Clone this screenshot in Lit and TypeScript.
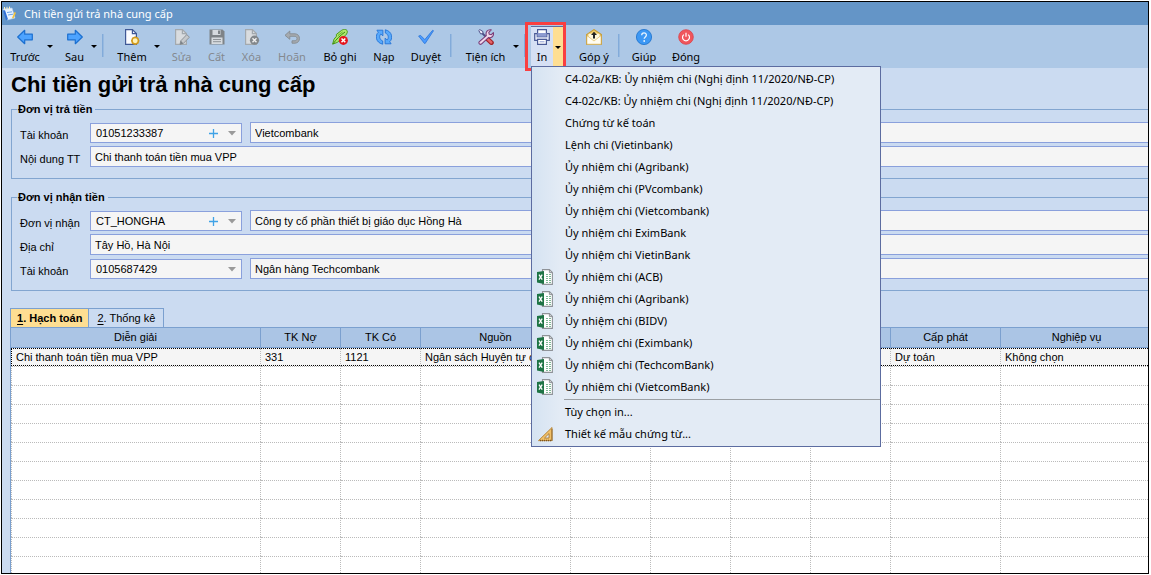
import { LitElement, html, svg, css, nothing } from "lit";
import { customElement } from "lit/decorators.js";
import { classMap } from "lit/directives/class-map.js";

const arrowRight = svg`<path d="M.7 5.2h7.6V1.3L15.3 8l-7 6.700V10.800H.7z" fill="#4da3ff" stroke="#1b6fd0" stroke-width="1.200" stroke-linejoin="round"/>`;
const doc = (stroke: string, fill: string) => svg`<path d="M1.600.6h6.800l4 4v10.800H1.600z" fill="${fill}" stroke="${stroke}" stroke-width="1.200"/><path d="M8.400.6v4h4" fill="none" stroke="${stroke}" stroke-width="1.200"/>`;
const halfTurn = svg`<path d="M6.700 15.200C-.6 13.600-1 6 2.300 3.300L.9 1.200h6v5.600L4.800 5C3 7 3.300 10.600 6.700 12z" fill="#58a9fb" stroke="#2273d6" stroke-width=".9" stroke-linejoin="round"/>`;

const icons: Record<string, unknown> = {
  back: svg`<g transform="matrix(-1 0 0 1 16 0)">${arrowRight}</g>`,
  next: arrowRight,
  add: svg`${doc("#3f5896", "#fbfcff")}<circle cx="11.200" cy="11.700" r="3.200" fill="#fff2b8" stroke="#d29a1c" stroke-width="1.500"/><path d="M11.200 7.600v1M11.200 14.800v1M7.100 11.700h1M14.300 11.700h1M8.400 8.900l.6.600M14 8.900l-.6.600M8.400 14.500l.6-.6M14 14.500l-.6-.6" stroke="#d29a1c" stroke-width="1.400"/>`,
  edit: svg`${doc("#a3a9ae", "#d9dcdf")}<path d="M6 15.400l.8-3.600 6-6.200 2.600 2.600-6 6.200z" fill="#c6c9cc" stroke="#8e9499"/><path d="M6 15.400l.8-3.600 2.600 2.600z" fill="#7d8388"/>`,
  save: svg`<path d="M.5.5h13l2 2v13H.5z" fill="#7e8387"/><path d="M3.500 1h8v5h-8z" fill="#d6dade"/><path d="M9 1.500h2v3.500H9z" fill="#7e8387"/><path d="M2.500 8.500h11v6.500h-11z" fill="#d6dade"/><path d="M4 10.500h8M4 12.700h8" stroke="#8f9498"/>`,
  remove: svg`${doc("#a3a9ae", "#d9dcdf")}<circle cx="10.500" cy="11.200" r="4.600" fill="#82878b"/><path d="M8.500 9.200l4 4M12.500 9.200l-4 4" stroke="#f0f0f0" stroke-width="1.400"/>`,
  undo: svg`<path d="M1 6.300L5.800 2v2.800h5.200c6 .2 5.900 9.200 0 9.400H8v-2.400h3c2.700-.2 2.700-4.300 0-4.500H5.800v3z" fill="#a5aaaf" stroke="#858b91" stroke-width=".9" stroke-linejoin="round"/>`,
  unpost: svg`<path d="M.6 15.200L2 10.200 4.500 7.200 4.300 5.500 9.500 1.400C12-.4 15.800.2 15.300 3.300c-.5 2.700-3 4-5 5.700L5.300 13.400z" fill="#aee66c" stroke="#4b9a1b" stroke-linejoin="round"/><path d="M1 15C4 10.500 8 6.500 13 3" stroke="#3b8a12" fill="none"/><path d="M6 6.500c2-1.500 3-2.300 4.500-3.500" stroke="#5cae2a"/><circle cx="11.400" cy="11.400" r="4.500" fill="#e5141c"/><path d="M9.500 9.500l3.800 3.800M13.300 9.500l-3.800 3.800" stroke="#fff" stroke-width="1.500"/>`,
  reload: svg`${halfTurn}<g transform="rotate(180 8 8)">${halfTurn}</g>`,
  check: svg`<path d="M.6 7l2-.6 4.200 4.200L14.600 1.300l.9.400L7.200 14.400h-.8z" fill="#4c9cff" stroke="#2a74d8" stroke-width=".8" stroke-linejoin="round"/>`,
  tools: svg`<path d="M3 3l6 6" stroke="#4d4f86" stroke-width="1.800"/><path d="M.8 1.500L1.800.6 5 2.600l-.2 2-2.200.3z" fill="#f4f4ff" stroke="#4d4f86"/><path d="M9.500 10l4 3.700" stroke="#a02329" stroke-width="4.600" stroke-linecap="round"/><path d="M9.700 10.200l3.600 3.300" stroke="#e4656a" stroke-width="2.400" stroke-linecap="round"/><path d="M1.100 12.900l7.200-6.300C7.300 3.200 9.500.2 13.200.9L10.800 3.300l.5 2 2 .4 2.100-2.100c.7 3.700-2 5.700-5 5L3.400 15.100c-1.500.8-3-.8-2.300-2.200z" fill="#f0d8ea" stroke="#7a3d78" stroke-width="1.100" stroke-linejoin="round"/>`,
  print: svg`<path d="M3.600 5V.7h8.800V5" fill="#fff" stroke="#4a5a96" stroke-width="1.200"/><path d="M.7 4.700h2.600v3h9.400v-3h2.600v6.600H.7z" fill="#e7ebf8" stroke="#4a5a96" stroke-width="1.200"/><path d="M3.500 4h9v3.700h-9z" fill="#8d9bd0"/><path d="M3.600 10.300h8.800v5H3.600z" fill="#fff" stroke="#4a5a96" stroke-width="1.200"/><path d="M5.500 12.800h5" stroke="#8d9bd0"/>`,
  feedback: svg`<path d="M.6 5.600L8 .6l7.400 5v9.700H.6z" fill="#f0cd6c" stroke="#c59a35" stroke-width="1.100"/><path d="M2.500 4.700h11v5L8 13 2.500 9.700z" fill="#fff8dc"/><path d="M.9 6.500L8 12l7.100-5.500v8.700H.9z" fill="#fffdf2" stroke="#d5ad4d" stroke-width=".6"/><path d="M8 2.800l3 3.200H9v3.500H7V6H5z" fill="#222"/>`,
  help: svg`<circle cx="8" cy="8" r="7.600" fill="#3d98f4" stroke="#1970cb" stroke-width=".8"/><path d="M5.700 6.200c0-3 4.700-3 4.700-.1 0 1.800-2.200 1.800-2.200 3.700" fill="none" stroke="#e8f4ff" stroke-width="1.300"/><circle cx="8.200" cy="12" r=".9" fill="#e8f4ff"/>`,
  power: svg`<circle cx="8" cy="8" r="7.300" fill="#f0565c" stroke="#d9434a" stroke-width=".8"/><path d="M5.800 5.600a3.500 3.500 0 1 0 4.400 0M8 3.800v4" fill="none" stroke="#fff" stroke-width="1.200"/>`,
  excel: svg`<path d="M5.500.6h6.900l3 3v11.800h-9.900z" fill="#fff" stroke="#8f9398" stroke-width="1.100"/><path d="M12.400.6v3h3" fill="none" stroke="#8f9398"/><path d="M9 5.500h2M12 5.500h2M9 7.500h2M12 7.500h2M9 9.500h2M12 9.500h2M9 11.500h2M12 11.500h2M9 13.500h2M12 13.500h2" stroke="#7fb795"/><path d="M0 3l7-1v13l-7-1.500z" fill="#1e7445"/><path d="M2 5.700l3.200 5M5.200 5.700L2 10.700" stroke="#fff" stroke-width="1.300"/>`,
  ruler: svg`<path d="M1.500 14.600L15 1.500v13.100z" fill="#f0c069" stroke="#b9873b"/><path d="M7.500 12L12 7.600V12z" fill="#e4ecf5" stroke="#a06f28" stroke-width=".8"/><path d="M3 14.500h12V3" fill="none" stroke="#7d541c" stroke-width="1.400" stroke-dasharray="1 1"/>`,
};

const icon = (name: string) => html`<svg class="icon" viewBox="0 0 16 16" aria-hidden="true">${icons[name]}</svg>`;

interface Tool {
  icon: string;
  label: string;
  size: string;
  split?: boolean;
  disabled?: boolean;
  open?: boolean;
}

const tools: Array<Tool | null> = [
  { icon: "back", label: "Trước", size: "m", split: true },
  { icon: "next", label: "Sau", size: "s", split: true },
  null,
  { icon: "add", label: "Thêm", size: "m", split: true },
  { icon: "edit", label: "Sửa", size: "s", disabled: true },
  { icon: "save", label: "Cất", size: "s", disabled: true },
  { icon: "remove", label: "Xóa", size: "s", disabled: true },
  { icon: "undo", label: "Hoãn", size: "m", disabled: true },
  { icon: "unpost", label: "Bỏ ghi", size: "l" },
  { icon: "reload", label: "Nạp", size: "r" },
  { icon: "check", label: "Duyệt", size: "m" },
  null,
  { icon: "tools", label: "Tiện ích", size: "xl", split: true },
  null,
  { icon: "print", label: "In", size: "xs", split: true, open: true },
  null,
  { icon: "feedback", label: "Góp ý", size: "m" },
  null,
  { icon: "help", label: "Giúp", size: "r" },
  { icon: "power", label: "Đóng", size: "m" },
];

const menu: Array<[string, string?] | null> = [
  ["C4-02a/KB: Ủy nhiệm chi (Nghị định 11/2020/NĐ-CP)"],
  ["C4-02c/KB: Ủy nhiệm chi (Nghị định 11/2020/NĐ-CP)"],
  ["Chứng từ kế toán"],
  ["Lệnh chi (Vietinbank)"],
  ["Ủy nhiệm chi (Agribank)"],
  ["Ủy nhiệm chi (PVcombank)"],
  ["Ủy nhiệm chi (Vietcombank)"],
  ["Ủy nhiệm chi EximBank"],
  ["Ủy nhiệm chi VietinBank"],
  ["Ủy nhiệm chi (ACB)", "excel"],
  ["Ủy nhiệm chi (Agribank)", "excel"],
  ["Ủy nhiệm chi (BIDV)", "excel"],
  ["Ủy nhiệm chi (Eximbank)", "excel"],
  ["Ủy nhiệm chi (TechcomBank)", "excel"],
  ["Ủy nhiệm chi (VietcomBank)", "excel"],
  null,
  ["Tùy chọn in..."],
  ["Thiết kế mẫu chứng từ...", "ruler"],
];

const columns: Array<[string, string, string]> = [
  ["Diễn giải", "Chi thanh toán tiền mua VPP", "wide"],
  ["TK Nợ", "331", "narrow"],
  ["TK Có", "1121", "narrow"],
  ["Nguồn", "Ngân sách Huyện tự chủ", "source"],
  ["", "", "narrow"],
  ["", "", "narrow"],
  ["", "", "narrow"],
  ["", "", "narrow"],
  ["Cấp phát", "Dự toán", "grant"],
  ["Nghiệp vụ", "Không chọn", "rest"],
];

@customElement("app-root")
export class AppRoot extends LitElement {
  static styles = css`
    :host {
      display: block;
      height: 100vh;
      box-sizing: border-box;
      padding: 1px 2px 1px 1px;
      background: #fff;
      color: #000;
      font: 11px/13px "Liberation Sans", Arial, sans-serif;
    }
    * { box-sizing: border-box; }
    button, input, select { font: inherit; color: inherit; margin: 0; padding: 0; border: 0; border-radius: 0; background: none; }
    .window { display: flex; flex-direction: column; height: 100%; border: 1px solid #000; background: #cbdbf1; overflow: hidden; }
    .ui { font-family: "Noto Sans", "Open Sans", sans-serif; font-size: 11px; line-height: 16px; }
    .icon { display: block; width: 16px; height: 16px; flex: none; }

    .titlebar { display: flex; align-items: center; gap: 6px; height: 23px; flex: none; background: #6495c7; color: #fff; }
    .toolbar { display: flex; height: 43px; flex: none; background: #adc8e6; }
    .tool { position: relative; display: flex; }
    .main { display: flex; flex-direction: column; align-items: center; gap: 4px; padding-top: 4px; white-space: nowrap; }
    .main:disabled { color: #84898f; }
    .xs { width: 22px; }
    .s { width: 35px; }
    .r { width: 38px; }
    .m { width: 46px; }
    .l { width: 50px; }
    .xl { width: 57px; }
    .more { width: 12px; margin-left: -3px; padding-right: 2px; display: flex; justify-content: center; align-items: center; }
    .caret { width: 0; border: 3px solid transparent; border-top-color: #000; border-bottom: 0; }
    .sep { width: 2px; height: 23px; margin: 9px 5px 0 1px; background: #82abda; border-right: 1px solid #98bae0; }
    .open { border-top: 1px solid #5c6ca0; margin-top: 1px; background: #d6e0f4; }
    .open .main { padding-top: 2px; }
    .open .more { width: 10px; margin: 0; padding: 0; background: #fede92; }
    .open .more::after { content: ""; position: absolute; inset: -5px -3px -3px -6px; border: 3px solid #f93f40; pointer-events: none; }

    .menu { position: absolute; z-index: 2; top: 39px; left: 0; width: 350px; margin: 0; padding: 1px 0; list-style: none;
      border: 1px solid #5c6ca0; background: linear-gradient(90deg, #d5e3f2, #e3ebf5 28px); }
    .item { display: flex; align-items: center; gap: 12px; width: 100%; height: 22px; padding-left: 5px; text-align: left; white-space: nowrap; }
    .item .blank { width: 16px; }
    .rule { height: 1px; margin: 1px 0 1px 32px; background: #9b9fa3; }

    .content { display: flex; flex-direction: column; flex: 1; min-height: 0; }
    h1 { margin: 0; padding: 0 9px; height: 35px; flex: none; font-size: 22px; line-height: 34px; font-weight: bold; white-space: nowrap; }
    fieldset { min-width: 0; margin: 0 0 12px 9px; padding: 6px 0 11px 8px; border: 1px solid #82a5d0; border-right: 0; }
    legend { margin-left: -3px; padding: 0 3px 0 1px; height: 13px; font-weight: bold; }
    .rows { display: flex; flex-direction: column; gap: 3px; }
    .row { display: grid; grid-template-columns: 70px 152px 1fr; height: 21px; }
    .row label { padding-top: 7px; white-space: nowrap; }
    .combo { display: flex; align-items: center; align-self: end; height: 20px; border: 1px solid #8aa0dc; background: #f5f5f5; }
    .combo select { appearance: none; flex: 1; min-width: 0; height: 18px; padding-left: 5px; }
    .plus { width: 20px; height: 18px; display: flex; align-items: center; justify-content: center; }
    .plus svg { width: 9px; height: 9px; }
    .drop { width: 18px; height: 5px; }
    .text { height: 21px; min-width: 0; padding-left: 4px; border: 1px solid #8aa0dc; border-right: 0; background: #f5f5f5; }
    .name { margin-left: 8px; }
    .full { grid-column: 2 / 4; }

    .tabs { display: flex; margin: 5px 0 0 8px; height: 19px; flex: none; }
    .tab { border: 1px solid #7ba0cf; border-bottom: 0; height: 19px; padding: 0 8px; }
    .tab + .tab { border-left: 0; }
    .active { padding: 0 6px; background: #fede92; font-weight: bold; }
    .tab u { text-underline-offset: 2px; }

    .grid { flex: 1; min-height: 0; overflow: hidden; margin-left: 8px; border-left: 1px solid #7ba0cf; background: #fff; }
    table { width: calc(100% + 4px); table-layout: fixed; border-collapse: separate; border-spacing: 0; }
    th, td { padding: 0; white-space: nowrap; overflow: hidden; font-weight: normal; }
    th { height: 21px; border: solid #7ba0cf; border-width: 1px 1px 1px 0; background: #abc5e5; }
    td { height: 19px; border-right: 1px dotted #bbb; border-top: 1px dotted #bbb; }
    td:first-child { border-left: 1px dotted #bbb; }
    th:last-child, td:last-child { border-right: 0; }
    .wide { width: 250px; }
    .narrow { width: 80px; }
    .source { width: 150px; }
    .grant { width: 110px; }
    .current { outline: 1px dotted #000; outline-offset: -1px; background: #f5f5f5; }
    .current td { height: 18px; padding-left: 4px; border-top: 0; }
    .current td:first-child { border-left-color: transparent; }
  `;

  private renderTool(t: Tool | null) {
    if (!t) return html`<span class="sep"></span>`;
    return html`<div class=${classMap({ tool: true, open: !!t.open })}>
      <button class="main ${t.size}" ?disabled=${t.disabled}>${icon(t.icon)}<span>${t.label}</span></button>
      ${t.split ? html`<button class="more" aria-label="${t.label}: thêm lựa chọn" aria-expanded=${t.open ? "true" : "false"}><span class="caret"></span></button>` : nothing}
      ${t.open ? this.renderMenu() : nothing}
    </div>`;
  }

  private renderMenu() {
    return html`<ul class="menu">
      ${menu.map((m) => m
        ? html`<li><button class="item">${m[1] ? icon(m[1]) : html`<span class="blank"></span>`}<span>${m[0]}</span></button></li>`
        : html`<li class="rule" role="separator"></li>`)}
    </ul>`;
  }

  private renderCombo(id: string, value: string, plus: boolean) {
    return html`<div class="combo">
      <select id=${id}><option>${value}</option></select>
      ${plus ? html`<button class="plus" aria-label="Thêm mới"><svg viewBox="0 0 9 9"><path d="M4.500 0v9M0 4.500h9" stroke="#3fa2e6" stroke-width="1.300"/></svg></button>` : nothing}
      <svg class="drop" viewBox="0 0 18 5" aria-hidden="true"><path d="M5 0h8L9 4.500z" fill="#9a9a9a"/></svg>
    </div>`;
  }

  private renderPair(id: string, label: string, code: string, name: string, plus: boolean) {
    return html`<div class="row">
      <label for=${id}>${label}</label>
      ${this.renderCombo(id, code, plus)}
      <input class="text name" aria-label="${label}: tên" .value=${name} />
    </div>`;
  }

  private renderFull(id: string, label: string, value: string) {
    return html`<div class="row">
      <label for=${id}>${label}</label>
      <input class="text full" id=${id} .value=${value} />
    </div>`;
  }

  render() {
    return html`<div class="window">
      <header class="titlebar ui">
        <svg class="icon" viewBox="0 0 16 16" aria-hidden="true">
          <path d="M1 3l9-1 3 10-8 2z" fill="#e9f3ff" stroke="#b9d3f2" stroke-width=".6"/>
          <path d="M1 4.500l2-.3 3 9-2 1z" fill="#2f6fd6"/>
          <path d="M5 6.500l5-.7M6 9l5-.8" stroke="#6aa3ea"/>
          <path d="M10 12l2.500-6 1.500.8-2.500 5.700z" fill="#f4c33c"/>
          <path d="M2.500 1v2.500M5 .8v2.500M7.500.6v2.500" stroke="#fff2c0"/>
        </svg>
        <span>Chi tiền gửi trả nhà cung cấp</span>
      </header>
      <nav class="toolbar ui">${tools.map((t) => this.renderTool(t))}</nav>
      <main class="content">
        <h1>Chi tiền gửi trả nhà cung cấp</h1>
        <fieldset>
          <legend>Đơn vị trả tiền</legend>
          <div class="rows">
            ${this.renderPair("payer-account", "Tài khoản", "01051233387", "Vietcombank", true)}
            ${this.renderFull("payment-note", "Nội dung TT", "Chi thanh toán tiền mua VPP")}
          </div>
        </fieldset>
        <fieldset>
          <legend>Đơn vị nhận tiền</legend>
          <div class="rows">
            ${this.renderPair("payee", "Đơn vị nhận", "CT_HONGHA", "Công ty cổ phần thiết bị giáo dục Hồng Hà", true)}
            ${this.renderFull("payee-address", "Địa chỉ", "Tây Hồ, Hà Nội")}
            ${this.renderPair("payee-account", "Tài khoản", "0105687429", "Ngân hàng Techcombank", false)}
          </div>
        </fieldset>
        <div class="tabs" role="tablist">
          <button class="tab active" role="tab" aria-selected="true"><u>1</u>. Hạch toán</button>
          <button class="tab" role="tab" aria-selected="false"><u>2</u>. Thống kê</button>
        </div>
        <div class="grid">
          <table>
            <thead><tr>${columns.map(([head, , size]) => html`<th class=${size}>${head}</th>`)}</tr></thead>
            <tbody>
              <tr class="current">${columns.map(([, value]) => html`<td>${value}</td>`)}</tr>
              ${Array.from({ length: 11 }, () => html`<tr>${columns.map(() => html`<td></td>`)}</tr>`)}
            </tbody>
          </table>
        </div>
      </main>
    </div>`;
  }
}
